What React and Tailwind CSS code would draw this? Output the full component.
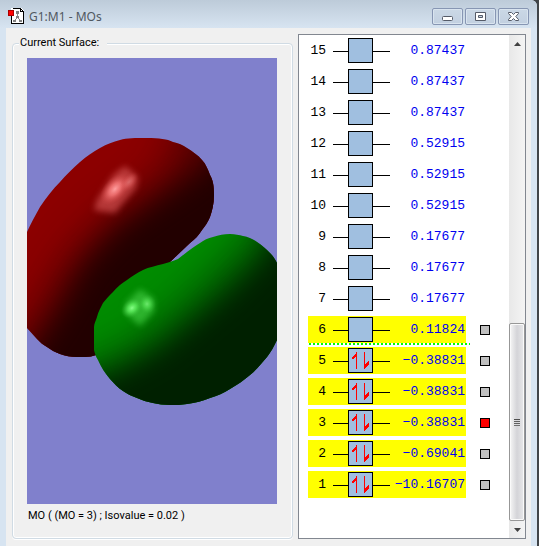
const orbitals = [
  { n: 15, energy: "0.87437", electrons: 0 },
  { n: 14, energy: "0.87437", electrons: 0 },
  { n: 13, energy: "0.87437", electrons: 0 },
  { n: 12, energy: "0.52915", electrons: 0 },
  { n: 11, energy: "0.52915", electrons: 0 },
  { n: 10, energy: "0.52915", electrons: 0 },
  { n: 9, energy: "0.17677", electrons: 0 },
  { n: 8, energy: "0.17677", electrons: 0 },
  { n: 7, energy: "0.17677", electrons: 0 },
  { n: 6, energy: "0.11824", electrons: 0, surface: true, lumo: true },
  { n: 5, energy: "−0.38831", electrons: 2, surface: true },
  { n: 4, energy: "−0.38831", electrons: 2, surface: true },
  { n: 3, energy: "−0.38831", electrons: 2, surface: true, current: true },
  { n: 2, energy: "−0.69041", electrons: 2, surface: true },
  { n: 1, energy: "−10.16707", electrons: 2, surface: true },
];

function AppIcon() {
  return (
    <svg width="17" height="17" viewBox="0 0 17 17" shapeRendering="crispEdges" aria-hidden="true">
      <path d="M3 0H13L16 3V16H3Z" fill="#fff" />
      <path d="M4.5 0.5H12.5L15.5 3.5V15.5H3.5V7.5M12.5 0.5V3.5H15.5" fill="none" stroke="#000" />
      <path d="M9.5 5V9L6.5 12.5M9.5 9L12.5 12.5" fill="none" stroke="#888" />
      <path d="M8 3h3v3h-3zM8 8h3v2h-3zM5 12h3v2h-3zM11 12h3v2h-3z" fill="#808080" />
      <rect x="0.5" y="2.5" width="5" height="5" fill="#f00" stroke="#a00" />
    </svg>
  );
}

function TitleButton({ label, children }) {
  return (
    <button
      type="button"
      aria-label={label}
      className="flex h-[17px] w-[31px] items-center justify-center rounded-xs border border-[#8796b3] bg-linear-to-b from-[#cbd8e6] to-[#c2d0e0] shadow-[inset_0_0_0_1px_#d9e4ef]"
    >
      <svg width="13" height="11" viewBox="0 0 13 11">
        {children}
      </svg>
    </button>
  );
}

function TitleBar() {
  return (
    <header className="flex h-7 items-start justify-between px-0.5">
      <div className="flex items-center gap-1 pt-2">
        <AppIcon />
        <h1 className="font-['Noto_Sans',sans-serif] text-[12px] leading-4 text-[#505860]">G1:M1 - MOs</h1>
      </div>
      <div className="flex gap-0.5 pt-2">
        <TitleButton label="Minimize">
          <rect x="1.5" y="5.5" width="10" height="4" rx="1" fill="#fff" stroke="#555b68" />
        </TitleButton>
        <TitleButton label="Maximize">
          <path d="M1.5 1.5H11.5V9.5H1.5ZM4.5 4.5V6.5H8.5V4.5Z" fill="#fff" fillRule="evenodd" stroke="#555b68" />
        </TitleButton>
        <TitleButton label="Close">
          <path
            d="M1.5 1.5H4.5L6.5 3.5L8.5 1.5H11.5V2.5L8.8 5.5L11.5 8.5V9.5H8.5L6.5 7.5L4.5 9.5H1.5V8.5L4.2 5.5L1.5 2.5Z"
            fill="#fff"
            stroke="#555b68"
          />
        </TitleButton>
      </div>
    </header>
  );
}

const redLobe =
  "M0 174C3 167 8 158 13 149C19 140 26 131 33 124C39 117 46 110 53 104C60 98 66 94 73 90C80 86 86 84 93 82C100 80 108 80 120 80C132 80 140 81 146 84C151 85 156 87 160 90C166 94 171 97 175 102C179 106 181 112 183 117C186 122 187 128 187 137C187 146 185 153 183 159C181 164 178 168 175 172C172 177 168 181 163 185L143 204L120 260L69 297C66 298 62 299 58 299H50C44 299 38 298 33 296C28 294 24 292 20 289C16 287 13 284 10 281L0 270Z";
const greenLobe =
  "M67 269C67 266 69 262 70 259C71 254 74 249 76 245C79 241 82 238 86 234C90 229 95 225 100 222C105 218 110 215 116 212C122 209 129 208 136 206C142 204 147 203 151 201C154 199 157 196 160 194C164 191 168 188 173 185C177 182 181 180 186 179C192 177 197 176 203 176C208 176 212 177 216 178C221 179 226 181 230 184C235 187 239 191 243 195C246 198 248 201 250 205V282C247 288 244 294 240 299C235 305 229 312 223 317C217 322 210 327 203 331C197 335 190 338 183 340C176 343 168 345 160 346C154 347 149 347 143 347C137 347 131 346 126 345C120 344 115 342 110 340C105 338 100 336 96 333C91 330 87 325 83 321C78 315 74 309 71 302C69 299 68 296 67 292Z";

function SurfaceView() {
  return (
    <svg viewBox="0 0 250 446" className="block w-full bg-[#8080cc]" role="img" aria-label="Molecular orbital surface">
      <defs>
        <clipPath id="redClip">
          <path d={redLobe} />
        </clipPath>
        <clipPath id="greenClip">
          <path d={greenLobe} />
        </clipPath>
        <filter id="shade" x="-50%" y="-50%" width="200%" height="200%" colorInterpolationFilters="sRGB">
          <feGaussianBlur stdDeviation="14" />
        </filter>
        <filter id="wideShade" x="-50%" y="-50%" width="200%" height="200%" colorInterpolationFilters="sRGB">
          <feGaussianBlur stdDeviation="20" />
        </filter>
        <filter id="soft" x="-50%" y="-50%" width="200%" height="200%" colorInterpolationFilters="sRGB">
          <feGaussianBlur stdDeviation="3" />
        </filter>
        <radialGradient id="redGlint">
          <stop offset="0" stopColor="#ffa0a0" />
          <stop offset="0.4" stopColor="#ff8080" stopOpacity="0.7" />
          <stop offset="1" stopColor="#d04040" stopOpacity="0" />
        </radialGradient>
        <radialGradient id="greenGlint">
          <stop offset="0" stopColor="#88ff88" />
          <stop offset="0.4" stopColor="#60f060" stopOpacity="0.7" />
          <stop offset="1" stopColor="#30b030" stopOpacity="0" />
        </radialGradient>
      </defs>

      <g clipPath="url(#redClip)">
        <rect y="70" width="200" height="240" fill="#8c0000" />
        <path
          d="M155 40L148 100L120 130L85 155L58 180L38 205L22 232L5 262L-20 290V400H300V40Z"
          fill="#220000"
          opacity="0.55"
          filter="url(#wideShade)"
        />
        <path
          d="M205 40L184 105L160 123L126 147L93 170L73 191L56 211L42 238L28 262L0 305V400H300V40Z"
          fill="#220000"
          filter="url(#shade)"
        />
        <path d="M98 108L111 119L109 130L96 145L88 155L67 152L70 142L86 117Z" fill="#d05050" opacity="0.7" filter="url(#soft)" />
        <ellipse cx="88" cy="131" rx="19" ry="11" transform="rotate(-48 88 131)" fill="url(#redGlint)" />
        <ellipse cx="102" cy="124" rx="12" ry="7" transform="rotate(-50 102 124)" fill="url(#redGlint)" opacity="0.45" />
      </g>

      <g clipPath="url(#greenClip)">
        <rect x="60" y="170" width="190" height="180" fill="#008c00" />
        <path
          d="M250 120L225 175L185 215L150 248L120 272L95 290L40 310V440H340V120Z"
          fill="#002000"
          opacity="0.5"
          filter="url(#wideShade)"
        />
        <path
          d="M270 130L236 200L204 232L167 263L137 288L112 303L83 318L30 330V440H340V130Z"
          fill="#002000"
          filter="url(#shade)"
        />
        <path d="M113 231L127 241V253L113 268L98 254L99 245Z" fill="#38c038" opacity="0.8" filter="url(#soft)" />
        <ellipse cx="105" cy="250" rx="12" ry="9" transform="rotate(-40 105 250)" fill="url(#greenGlint)" />
        <ellipse cx="120" cy="246" rx="9" ry="10" fill="url(#greenGlint)" opacity="0.7" />
      </g>
    </svg>
  );
}

function SurfacePanel() {
  return (
    <fieldset className="mt-0.5 min-w-0 flex-1 rounded-sm border border-[#d0dbe4] pt-2 pr-[15px] pb-3.5 pl-3.5 font-[Roboto,sans-serif] text-[11px] shadow-[inset_0_0_0_1px_#fff,0_1px_0_#fff]">
      <legend className="-ml-2 bg-[#f0f0f0] pr-2 pl-px leading-3.5">Current Surface:</legend>
      <SurfaceView />
      <p className="pt-1 pl-px leading-4">MO ( (MO = 3) ; Isovalue = 0.02 )</p>
    </fieldset>
  );
}

function OrbitalBox({ electrons }) {
  return (
    <svg width="57" height="25" viewBox="0 0 57 25" shapeRendering="crispEdges" className="shrink-0" aria-hidden="true">
      <path d="M0 13.5H57" stroke="#000" />
      <rect x="15.5" y="0.5" width="24" height="24" fill="#a0bfe0" stroke="#000" />
      {electrons === 2 && (
        <g fill="#f00">
          <path d="M23 4H24V21H23ZM24 4V8L20 11H19V9Z" />
          <path d="M31 4H32V21H31ZM31 21V17L35 13H36V16Z" />
        </g>
      )}
    </svg>
  );
}

function OrbitalRow({ orbital }) {
  const { n, energy, electrons, surface, lumo, current } = orbital;
  return (
    <li>
      <div className="flex items-center gap-3.5">
        <div
          className={`flex h-[27px] w-[158px] items-center pr-px font-['Liberation_Mono',monospace] text-[13px] ${
            surface ? "bg-[#ffff00]" : ""
          }`}
        >
          <span className="mr-[7px] w-[18px] text-right">{n}</span>
          <OrbitalBox electrons={electrons} />
          <span className="flex-1 text-right text-[#0000f0]">{energy}</span>
        </div>
        {surface && (
          <input
            type="checkbox"
            aria-label={`Surface for MO ${n}`}
            defaultChecked={current}
            className="size-2.5 appearance-none border border-black bg-[#c0c0c0] checked:bg-[#ff0000]"
          />
        )}
      </div>
      <div className="h-1">
        {lumo && (
          <div className="ml-px h-0.5 w-[161px] bg-[repeating-linear-gradient(to_right,#00ff00_0_2px,#ffffff_2px_4px)]" />
        )}
      </div>
    </li>
  );
}

function ScrollBar() {
  return (
    <div className="flex w-4 shrink-0 flex-col bg-linear-to-r from-[#e8e8e8] to-[#f4f4f4]">
      <button type="button" aria-label="Scroll up" className="flex h-[17px] items-center justify-center">
        <svg width="7" height="4" viewBox="0 0 7 4">
          <path d="M0 4L3.5 0L7 4Z" fill="#404040" />
        </svg>
      </button>
      <div className="flex-1" />
      <div className="flex h-[198px] flex-col items-center justify-center gap-px rounded-xs border border-[#979797] bg-linear-to-r from-[#f6f6f6] via-[#d4d4d8] to-[#e8e8ea] shadow-[inset_0_0_0_1px_#fafafa]">
        <span className="h-px w-1.5 bg-[#505050]" />
        <span className="h-px w-1.5 bg-[#606060]" />
        <span className="h-px w-1.5 bg-[#606060]" />
        <span className="h-px w-1.5 bg-[#707070]" />
      </div>
      <button type="button" aria-label="Scroll down" className="flex h-[17px] items-center justify-center">
        <svg width="7" height="4" viewBox="0 0 7 4">
          <path d="M0 0L3.5 4L7 0Z" fill="#404040" />
        </svg>
      </button>
    </div>
  );
}

export default function App() {
  return (
    <div className="min-h-screen bg-[#404448] font-['Liberation_Sans',sans-serif] text-black">
      <div className="mr-0.5 flex min-h-screen flex-col overflow-hidden rounded-tr-md bg-[#d7e4f1]">
        <div className="bg-linear-to-b from-[#bdcbd9] to-[#d7e4f1] px-1.5">
          <TitleBar />
        </div>
        <main className="mx-1.5 flex-1 bg-[#f0f0f0] pt-1.5 pr-[5px] pl-1.5">
          <div className="flex gap-[5px]">
            <SurfacePanel />
            <section className="flex w-[228px] shrink-0 border border-[#828790] bg-white" aria-label="Molecular orbitals">
              <ul className="flex-1 pt-0.5 pl-[9px]">
                {orbitals.map((orbital) => (
                  <OrbitalRow key={orbital.n} orbital={orbital} />
                ))}
              </ul>
              <ScrollBar />
            </section>
          </div>
        </main>
      </div>
    </div>
  );
}
